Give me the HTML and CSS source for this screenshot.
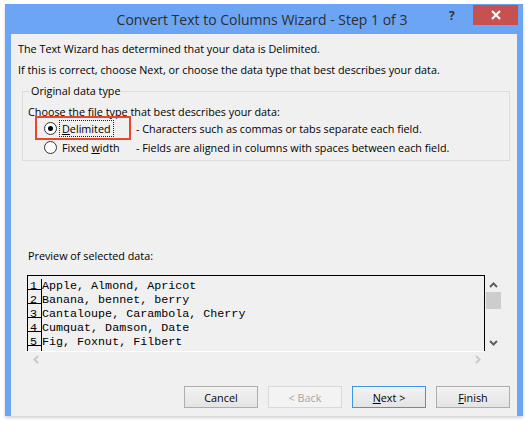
FILE: index.html
```html
<!DOCTYPE html>
<html lang="en">
<head>
  <meta charset="UTF-8" />
  <title>Convert Text to Columns Wizard</title>
  <link rel="stylesheet" href="styles.css">
</head>
<body>

<div class="window">
  <div class="titlebar">
    <div class="title">Convert Text to Columns Wizard - Step 1 of 3</div>
    <div class="help">?</div>
    <div class="close">
      <svg width="12" height="12" viewBox="0 0 12 12">
        <path d="M2 2 L10 10 M10 2 L2 10" stroke="#fff" stroke-width="2.2" />
      </svg>
    </div>
  </div>

  <div class="client">
    <p class="intro">The Text Wizard has determined that your data is Delimited.</p>
    <p class="intro second">If this is correct, choose Next, or choose the data type that best describes your data.</p>

    <fieldset class="group">
      <legend>Original data type</legend>
      <p class="choose">Choose the file type that best describes your data:</p>

      <div class="option">
        <span class="radio checked"></span>
        <span class="opt-label"><span class="focus"><u>D</u>elimited</span></span>
        <span class="opt-desc">- Characters such as commas or tabs separate each field.</span>
        <span class="highlight"></span>
      </div>
      <div class="option">
        <span class="radio"></span>
        <span class="opt-label">Fixed <u>w</u>idth</span>
        <span class="opt-desc">- Fields are aligned in columns with spaces between each field.</span>
      </div>
    </fieldset>

    <p class="preview-label">Preview of selected data:</p>

    <div class="preview">
      <div class="preview-view">
        <div class="row"><span class="num">1</span><span class="line">Apple, Almond, Apricot</span></div>
        <div class="row"><span class="num">2</span><span class="line">Banana, bennet, berry</span></div>
        <div class="row"><span class="num">3</span><span class="line">Cantaloupe, Carambola, Cherry</span></div>
        <div class="row"><span class="num">4</span><span class="line">Cumquat, Damson, Date</span></div>
        <div class="row"><span class="num">5</span><span class="line">Fig, Foxnut, Filbert</span></div>
        <div class="row"><span class="num">&nbsp;</span><span class="line"></span></div>
      </div>
      <div class="vscroll">
        <svg width="9" height="6" viewBox="0 0 9 6"><path d="M1 5 L4.5 1.5 L8 5" fill="none" stroke="#606060" stroke-width="2" /></svg>
        <div class="thumb"></div>
        <svg class="down" width="9" height="6" viewBox="0 0 9 6"><path d="M1 1 L4.5 4.5 L8 1" fill="none" stroke="#606060" stroke-width="2" /></svg>
      </div>
      <div class="hscroll">
        <svg width="6" height="9" viewBox="0 0 6 9"><path d="M5 1 L1.5 4.5 L5 8" fill="none" stroke="#c9c9c9" stroke-width="2" /></svg>
        <svg width="6" height="9" viewBox="0 0 6 9"><path d="M1 1 L4.5 4.5 L1 8" fill="none" stroke="#c9c9c9" stroke-width="2" /></svg>
      </div>
      <div class="corner"></div>
    </div>

    <div class="buttons">
      <button type="button">Cancel</button>
      <button type="button" disabled>&lt; Back</button>
      <button type="button" class="default"><u>N</u>ext &gt;</button>
      <button type="button"><u>F</u>inish</button>
    </div>
  </div>
</div>

</body>
</html>
```

FILE: styles.css
```css
body {
  margin: 0;
  background: #fff;
  font-family: "Open Sans", "Noto Sans", sans-serif;
  font-size: 10.8px;
  color: #000;
}
p {
  margin: 0;
}
.window {
  width: 518px;
  margin: 4px 0 0 5px;
  background: #6ba5f4;
  box-shadow: 0 2px 3px rgba(0, 0, 0, 0.18);
}
.titlebar {
  display: flex;
  height: 30px;
  padding-left: 77px;
}
.title {
  flex: 1;
  text-align: center;
  font-size: 14px;
  line-height: 31px;
  color: #2e2e2e;
}
.help {
  width: 24px;
  font-weight: bold;
  font-size: 12px;
  line-height: 24px;
  color: #333;
  padding-left: 7px;
  box-sizing: border-box;
}
.close {
  display: flex;
  align-items: center;
  justify-content: center;
  width: 45px;
  height: 20px;
  margin: 1px 5px 0 7px;
  background: #c75050;
}
.client {
  margin: 0 6px 6px;
  padding: 7px 7px 8px;
  background: #f0f0f0;
  height: 367px;
}
.intro {
  line-height: 16px;
}
.intro.second {
  margin-top: 5px;
}
.group {
  margin: 5px 0 0 4px;
  padding: 5px 0 3px 5px;
  border: 1px solid #dcdcdc;
  min-inline-size: 0;
}
.group legend {
  padding: 0 1px;
  margin-left: 2px;
  line-height: 16px;
}
.choose {
  line-height: 15px;
}
.option {
  position: relative;
  display: grid;
  grid-template-columns: 13px 69px auto;
  column-gap: 5px;
  align-items: center;
  height: 19px;
  padding-left: 16px;
}
.radio {
  width: 11px;
  height: 11px;
  border: 1px solid #333;
  border-radius: 50%;
  background: #fff;
  display: flex;
  align-items: center;
  justify-content: center;
}
.radio.checked::after {
  content: "";
  width: 5px;
  height: 5px;
  border-radius: 50%;
  background: #000;
}
.focus {
  margin-left: -3px;
  padding: 0 2px;
  border: 1px dotted #222;
}
.opt-desc {
  white-space: nowrap;
}
.highlight {
  position: absolute;
  left: 7px;
  top: -3px;
  width: 92px;
  height: 20px;
  border: 2px solid #e8472b;
}
.preview-label {
  margin: 87px 0 0 10px;
  line-height: 16px;
}
.preview {
  display: grid;
  grid-template-columns: 458px 17px;
  grid-template-rows: 76px 15px;
  margin: 11px 0 0 9px;
}
.preview-view {
  border: 1px solid #000;
  border-bottom: none;
  padding-top: 3px;
  overflow: hidden;
  font-family: "Liberation Mono", "Courier New", monospace;
  font-size: 11.7px;
}
.row {
  display: flex;
  height: 14px;
  line-height: 14px;
  white-space: pre;
}
.num {
  width: 11px;
  padding-left: 2px;
  border-right: 1px solid #000;
  background: linear-gradient(to bottom, transparent 10px, #000 10px, #000 11px, transparent 11px);
}
.vscroll {
  display: flex;
  flex-direction: column;
  align-items: center;
  padding-top: 7px;
}
.thumb {
  width: 15px;
  height: 17px;
  margin-top: 4px;
  background: #cdcdcd;
}
.vscroll .down {
  margin-top: 31px;
}
.hscroll {
  display: flex;
  justify-content: space-between;
  align-items: center;
  padding: 0 4px 0 6px;
  border-top: 1px solid #fff;
}
.buttons {
  display: flex;
  justify-content: flex-end;
  gap: 10px;
  margin-top: 20px;
}
button {
  width: 74px;
  height: 22px;
  padding: 0;
  border: 1px solid #adadad;
  background: linear-gradient(#f2f2f2, #e4e4e4);
  font-family: inherit;
  font-size: 10.8px;
  color: #000;
}
button:disabled {
  border-color: #d9d9d9;
  background: #f3f3f3;
  color: #a5a5a5;
}
button.default {
  border-color: #3d95e8;
}
```
